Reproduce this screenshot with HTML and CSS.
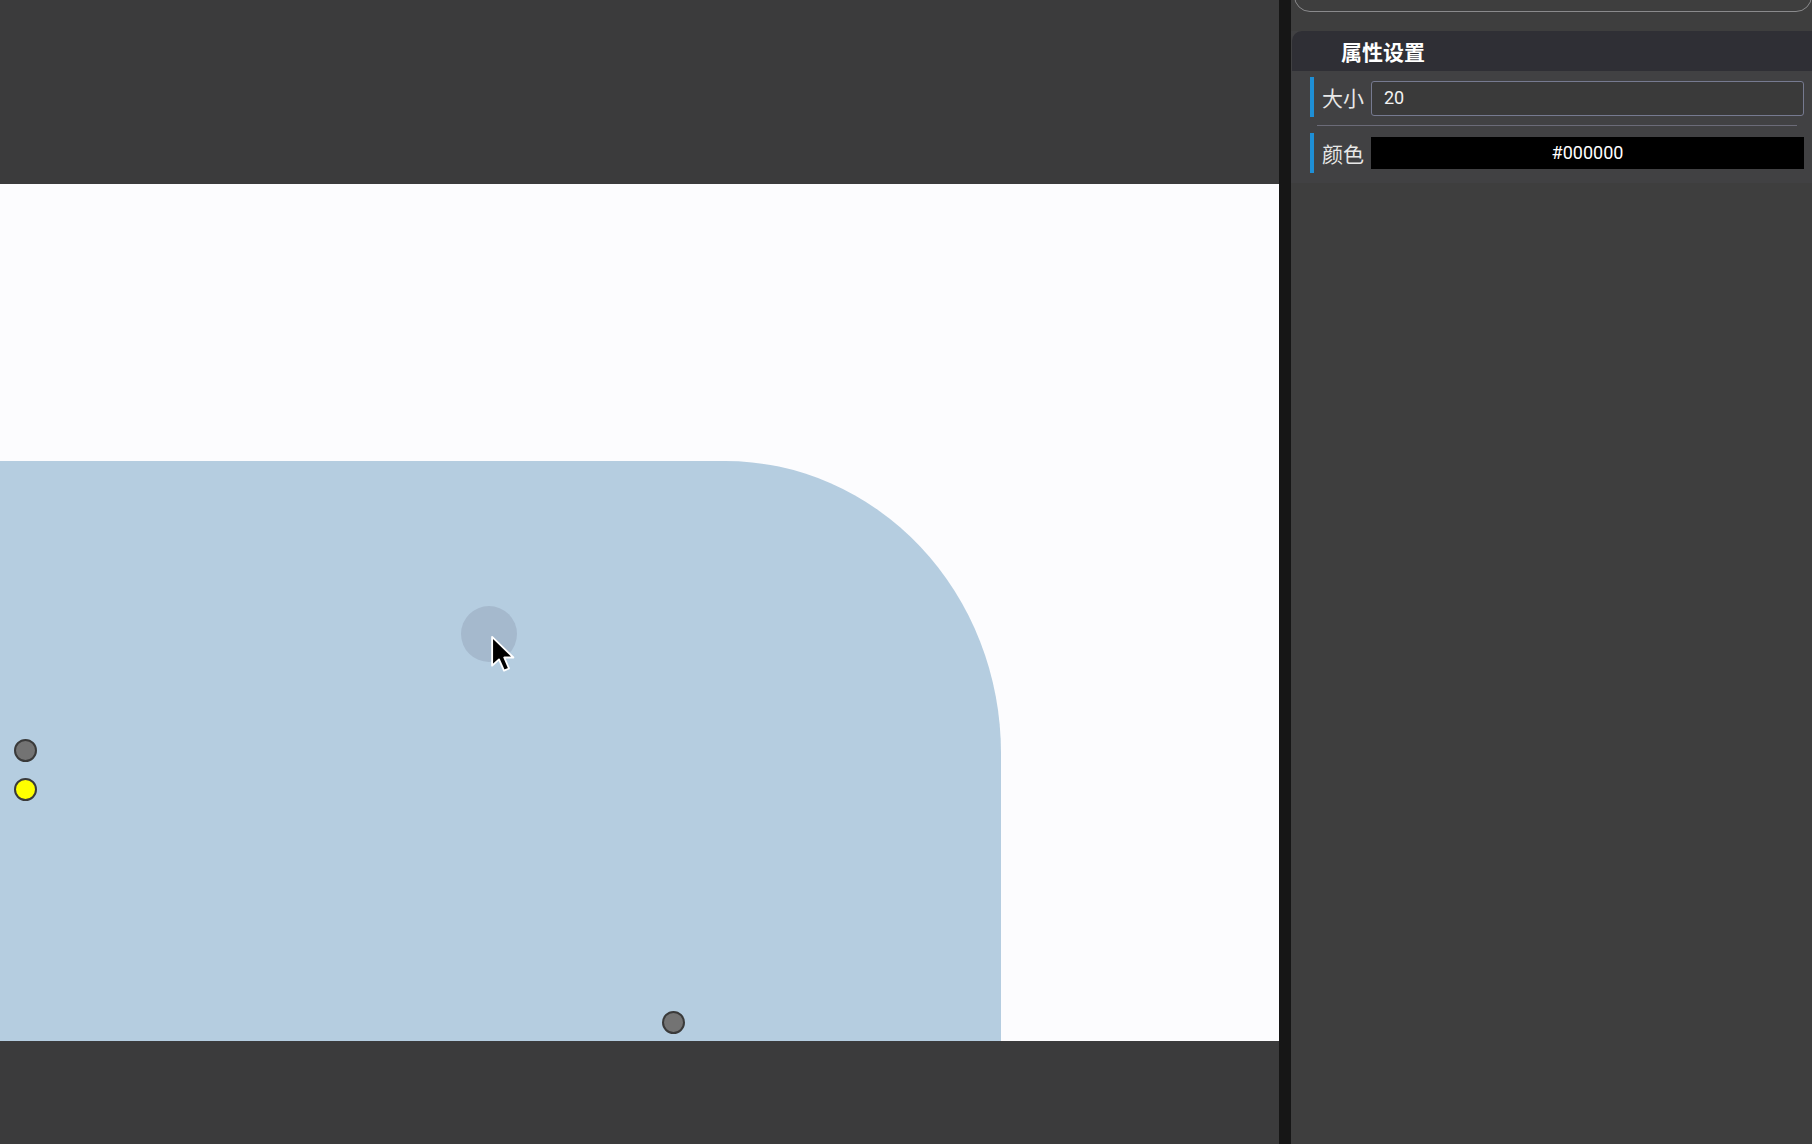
FILE: index.html
```html
<!DOCTYPE html>
<html lang="zh">
<head>
<meta charset="utf-8">
<title>属性设置</title>
<link rel="stylesheet" href="styles.css">
</head>
<body>
<div class="app">
  <div class="workspace">
    <div class="canvas">
      <div class="shape"></div>
      <div class="hover-dot"></div>
      <div class="handle handle-grey h1"></div>
      <div class="handle handle-yellow h2"></div>
      <div class="handle handle-grey h3"></div>
      <svg class="cursor" width="28" height="40" viewBox="0 0 22 32">
        <path d="M1.5 1.5 L1.5 24.5 L7 19.5 L11 28.5 L15 26.8 L11.2 18 L18.5 18 Z" fill="#000" stroke="#fff" stroke-width="1.5" stroke-linejoin="round"/>
      </svg>
    </div>
  </div>
  <div class="splitter"></div>
  <div class="panel">
    <div class="prev-box"></div>
    <div class="section">
      <div class="section-title">属性设置</div>
      <div class="prop-row">
        <span class="prop-bar"></span>
        <span class="prop-label">大小</span>
        <div class="prop-input">20</div>
      </div>
      <div class="prop-sep"></div>
      <div class="prop-row">
        <span class="prop-bar"></span>
        <span class="prop-label">颜色</span>
        <div class="prop-color">#000000</div>
      </div>
    </div>
  </div>
</div>
</body>
</html>
```

FILE: styles.css
```css
html, body {
  margin: 0;
  padding: 0;
  height: 100%;
  background: #3c3c3c;
  font-family: "Noto Sans CJK SC", "Noto Sans", sans-serif;
  overflow: hidden;
}

.app {
  display: flex;
  width: 1812px;
  height: 1144px;
}

.workspace {
  width: 1279px;
  flex: none;
  background: #3b3b3c;
  padding-top: 184px;
  box-sizing: border-box;
}

.canvas {
  position: relative;
  height: 857px;
  background: #fcfcfe;
  overflow: hidden;
}

.shape {
  position: absolute;
  left: -300px;
  top: 277px;
  width: 1301px;
  height: 800px;
  background: #b5cde0;
  border-top-right-radius: 276px 292px;
}

.hover-dot {
  position: absolute;
  left: 461px;
  top: 422px;
  width: 56px;
  height: 56px;
  border-radius: 50%;
  background: #a5b9cd;
}

.handle {
  position: absolute;
  width: 19px;
  height: 19px;
  border-radius: 50%;
  border: 2px solid #3a3a3a;
}

.handle-grey { background: #737373; }
.handle-yellow { background: #ffff00; }

.h1 { left: 14px; top: 555px; }
.h2 { left: 14px; top: 594px; }
.h3 { left: 662px; top: 827px; }

.cursor {
  position: absolute;
  left: 490px;
  top: 451px;
}

.splitter {
  width: 12px;
  flex: none;
  background: #161616;
}

.panel {
  flex: 1;
  background: #3e3e3e;
  overflow: hidden;
}

.prev-box {
  height: 40px;
  margin: -30px 0 0 3px;
  border: 1.5px solid #8a8a8c;
  border-radius: 16px;
}

.section {
  margin-top: 19px;
  padding-bottom: 10px;
  background: #414143;
}

.section-title {
  height: 40px;
  line-height: 40px;
  margin-left: 1px;
  padding-left: 49px;
  background: #2f2f35;
  border-top-left-radius: 10px;
  color: #ffffff;
  font-size: 21px;
  font-weight: bold;
}

.prop-row {
  display: flex;
  align-items: center;
  height: 40px;
  padding-left: 19px;
  padding-right: 8px;
  margin-top: 6px;
}

.prop-bar {
  width: 4px;
  height: 40px;
  background: #1e8fd6;
  flex: none;
}

.prop-label {
  margin-left: 8px;
  width: 49px;
  flex: none;
  color: #e8e8e8;
  font-size: 21px;
}

.prop-input {
  flex: 1;
  height: 35px;
  line-height: 32px;
  box-sizing: border-box;
  border: 1.5px solid #767a90;
  border-radius: 3px;
  background: #3a3a3a;
  padding-left: 12px;
  color: #f2f2f2;
  font-family: "Roboto", "Noto Sans", sans-serif;
  font-size: 18px;
  margin-top: 3px;
}

.prop-sep {
  height: 1px;
  margin: 8px 15px 0 26px;
  background: #6b6b78;
}

.prop-row + .prop-sep + .prop-row {
  margin-top: 7px;
}

.prop-color {
  flex: 1;
  height: 32px;
  line-height: 32px;
  background: #000000;
  color: #ffffff;
  text-align: center;
  font-family: "Roboto", "Noto Sans", sans-serif;
  font-size: 18px;
}
```
